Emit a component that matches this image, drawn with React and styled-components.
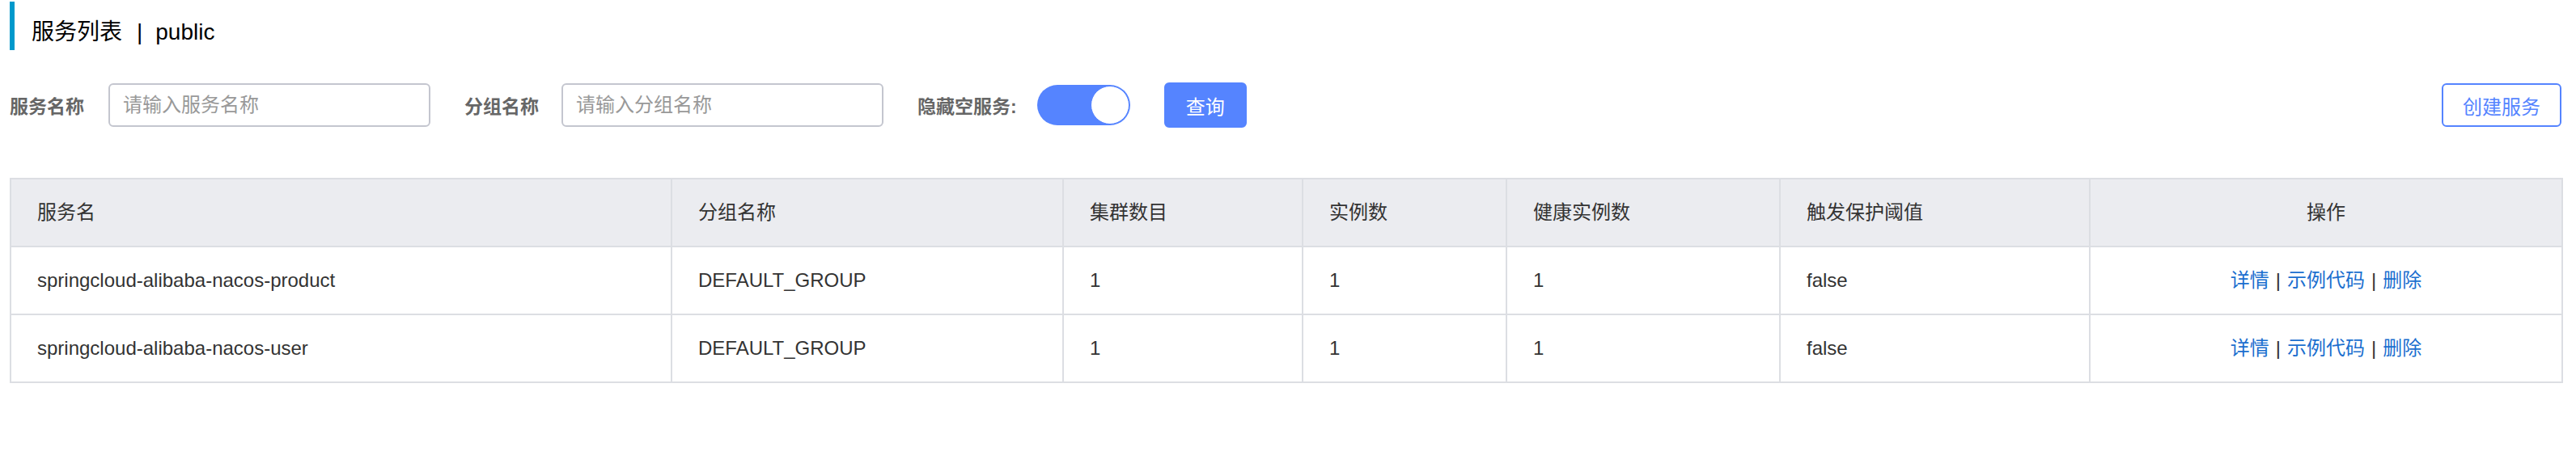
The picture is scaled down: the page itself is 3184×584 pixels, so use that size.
import React from 'react';
import styled, { createGlobalStyle } from 'styled-components';

const GlobalStyle = createGlobalStyle`
  html, body {
    margin: 0;
    padding: 0;
    background: #fff;
  }
  body {
    font-family: "Liberation Sans", "Noto Sans CJK SC", sans-serif;
    color: #333;
  }
`;

const columns = [
  { key: 'name', title: '服务名', width: 817 },
  { key: 'group', title: '分组名称', width: 484 },
  { key: 'clusters', title: '集群数目', width: 296 },
  { key: 'ips', title: '实例数', width: 252 },
  { key: 'healthy', title: '健康实例数', width: 338 },
  { key: 'threshold', title: '触发保护阈值', width: 383 },
  { key: 'ops', title: '操作', width: 584, center: true },
];

const services = [
  { name: 'springcloud-alibaba-nacos-product', group: 'DEFAULT_GROUP', clusters: 1, ips: 1, healthy: 1, threshold: 'false' },
  { name: 'springcloud-alibaba-nacos-user', group: 'DEFAULT_GROUP', clusters: 1, ips: 1, healthy: 1, threshold: 'false' },
];

const Page = styled.div`
  padding: 2px 18px 0 12px;
`;

const PageTitle = styled.h1`
  margin: 0 0 40px;
  height: 52px;
  padding-top: 8px;
  line-height: 60px;
  padding-left: 21px;
  border-left: 6px solid #0099cc;
  font-size: 28px;
  font-weight: 400;
  color: #000;
  white-space: nowrap;
`;

const Sep = styled.span`
  margin: 0 16px 0 18px;
`;

const FilterBar = styled.div`
  display: flex;
  align-items: center;
  height: 56px;
  margin-bottom: 62px;
`;

const FormItem = styled.div`
  display: flex;
  align-items: center;
  margin-right: 42px;
`;

const Label = styled.label`
  font-size: 23px;
  font-weight: 700;
  color: #666;
  margin-right: ${props => props.$gap || 30}px;
  white-space: nowrap;
`;

const Input = styled.input`
  box-sizing: border-box;
  width: 398px;
  height: 54px;
  padding: 0 16px;
  border: 2px solid #c4c6cf;
  border-radius: 6px;
  font-family: inherit;
  font-size: 24px;
  color: #333;
  outline: none;
  &::placeholder {
    color: #999;
  }
`;

const Switch = styled.div`
  box-sizing: border-box;
  width: 115px;
  height: 50px;
  border-radius: 25px;
  background: #5584ff;
  display: flex;
  justify-content: flex-end;
  align-items: center;
  padding: 0 1px;
`;

const Knob = styled.div`
  box-sizing: border-box;
  width: 48px;
  height: 48px;
  border-radius: 50%;
  background: #fff;
  border: 1px solid #5584ff;
`;

const Button = styled.button`
  box-sizing: border-box;
  height: ${props => props.$outline ? 54 : 56}px;
  padding: 0 ${props => props.$outline ? 24 : 25}px;
  border-radius: 6px;
  font-family: inherit;
  font-size: 24px;
  cursor: pointer;
  color: ${props => props.$outline ? '#5584ff' : '#fff'};
  background: ${props => props.$outline ? '#fff' : '#5584ff'};
  border: 2px solid #5584ff;
  margin-left: ${props => props.$push ? 'auto' : '0'};
`;

const Table = styled.table`
  width: 100%;
  table-layout: fixed;
  border-collapse: collapse;
  border: 2px solid #dcdee3;
  font-size: 24px;
`;

const Th = styled.th`
  background: #ebecf0;
  font-weight: 400;
  color: #333;
  text-align: ${props => props.$center ? 'center' : 'left'};
  padding: 23px 32px;
  line-height: 36px;
  border: 2px solid #dcdee3;
`;

const Td = styled.td`
  color: #333;
  text-align: ${props => props.$center ? 'center' : 'left'};
  padding: 23px 32px;
  line-height: 36px;
  border: 2px solid #dcdee3;
  white-space: nowrap;
`;

const Link = styled.a`
  color: #1b6fcf;
  text-decoration: none;
  cursor: pointer;
`;

const Pipe = styled.span`
  color: #333;
  margin: 0 8px;
`;

function Actions() {
  return (
    <>
      <Link>详情</Link>
      <Pipe>|</Pipe>
      <Link>示例代码</Link>
      <Pipe>|</Pipe>
      <Link>删除</Link>
    </>
  );
}

export default function App() {
  return (
    <Page>
      <GlobalStyle />
      <PageTitle>
        服务列表<Sep>|</Sep>public
      </PageTitle>

      <FilterBar>
        <FormItem>
          <Label>服务名称</Label>
          <Input placeholder="请输入服务名称" />
        </FormItem>
        <FormItem>
          <Label $gap={28}>分组名称</Label>
          <Input placeholder="请输入分组名称" />
        </FormItem>
        <FormItem>
          <Label $gap={25}>隐藏空服务:</Label>
          <Switch><Knob /></Switch>
        </FormItem>
        <Button>查询</Button>
        <Button $outline $push>创建服务</Button>
      </FilterBar>

      <Table>
        <colgroup>
          {columns.map(c => <col key={c.key} style={{ width: c.width }} />)}
        </colgroup>
        <thead>
          <tr>
            {columns.map(c => <Th key={c.key} $center={c.center}>{c.title}</Th>)}
          </tr>
        </thead>
        <tbody>
          {services.map(s => (
            <tr key={s.name}>
              <Td>{s.name}</Td>
              <Td>{s.group}</Td>
              <Td>{s.clusters}</Td>
              <Td>{s.ips}</Td>
              <Td>{s.healthy}</Td>
              <Td>{s.threshold}</Td>
              <Td $center><Actions /></Td>
            </tr>
          ))}
        </tbody>
      </Table>
    </Page>
  );
}
